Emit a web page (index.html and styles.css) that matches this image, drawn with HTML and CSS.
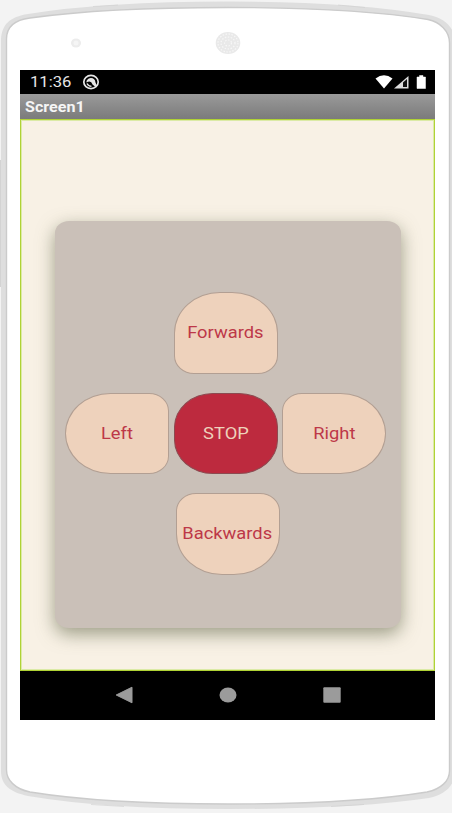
FILE: index.html
```html
<!DOCTYPE html>
<html lang="en">
<head>
<meta charset="utf-8">
<title>Screen1</title>
<link rel="stylesheet" href="styles.css">
</head>
<body>
<div class="phone">
  <svg class="shell" viewBox="0 0 452 813" aria-hidden="true">
    <path d="M1 42C1 24 10 17 28 14Q105 1.500 228 1.500Q353 1.500 429 15C446 18 455 29 455 42V771C455 785 446 794 429 798Q354 809 228 809Q104 809 28 796C10 792 1 785 1 771Z" fill="#dedede"/>
    <path d="M.500 160V287" stroke="#d3d3d3" stroke-width="1"/>
    <path d="M93 6.500L118 5M338 5L365 7.500M91 804.500L124 806.500M331 806.500L364 804.500" stroke="#cfcfcf" stroke-width=".6"/>
    <path d="M6.500 39C6.500 27 14 20 30 18Q105 7.500 228 7.500Q354 7.500 428 19.500C440 22 449.500 31 449.500 43V771C449.500 781 441 789 427 792Q354 804 228 804Q104 804 30 792C15 789 6.500 780 6.500 770Z" fill="#fff" stroke="#cbcbcb" stroke-width="1.400"/>
    <ellipse cx="76" cy="43" rx="5" ry="4.500" fill="#ececec"/>
    <circle cx="76" cy="43" r="2.500" fill="#f5f5f5"/>
    <ellipse cx="228" cy="43" rx="12.300" ry="11" fill="#e9e9e9"/>
    <ellipse cx="228" cy="43" rx="10" ry="9" fill="none" stroke="#f7f7f7" stroke-width="1.200" stroke-dasharray="1.500 1.500"/>
    <ellipse cx="228" cy="43" rx="7" ry="6" fill="none" stroke="#f7f7f7" stroke-width="1.200" stroke-dasharray="1.500 1.500"/>
    <ellipse cx="228" cy="43" rx="3.500" ry="3" fill="none" stroke="#f7f7f7" stroke-width="1.200" stroke-dasharray="1.500 1.500"/>
  </svg>
  <main class="screen">
    <header class="status">
      <span class="clock">11:36</span>
      <svg class="app-icon" viewBox="0 0 18 16">
        <ellipse cx="9" cy="8" rx="7.200" ry="6.600" fill="none" stroke="#e6e6e6" stroke-width="1.700"/>
        <path d="M4.500 7Q6 4 9 4Q13 4 13.500 8.500L15 12L13.500 13L10.500 10.500Q9.500 7.500 7.500 7.500Q6 7.500 4.500 8.500Z" fill="#e6e6e6"/>
        <path d="M5 9.500Q6 12 9.500 12.300" fill="none" stroke="#e6e6e6" stroke-width="1.300"/>
      </svg>
      <svg class="signals" viewBox="0 0 52 16">
        <path d="M.500 4.500Q9 -2 17.500 4.500L9 14.500Z" fill="#fff"/>
        <path d="M19 14.500L33.500 2V14.500Z" fill="#ddd"/>
        <path d="M28 8.500L32 5V13H28Z" fill="#111"/>
        <path d="M42 3H44.500V1.500H48V3H50.500V14.500H42Z" fill="#fff" stroke="#fff" stroke-width=".5" stroke-linejoin="round"/>
      </svg>
    </header>
    <div class="title"><span>Screen1</span></div>
    <section class="content">
      <div class="panel">
        <button class="key forwards"><span>Forwards</span></button>
        <div class="row">
          <button class="key left"><span>Left</span></button>
          <button class="key stop"><span>STOP</span></button>
          <button class="key right"><span>Right</span></button>
        </div>
        <button class="key backwards"><span>Backwards</span></button>
      </div>
    </section>
    <nav class="nav">
      <svg viewBox="0 0 18 18"><path d="M1.200 9L17 1.200V16.800Z" fill="#9b9b9b" stroke="#9b9b9b" stroke-linejoin="round"/></svg>
      <svg viewBox="0 0 18 18"><ellipse cx="9" cy="9" rx="8.500" ry="7.500" fill="#9b9b9b"/></svg>
      <svg viewBox="0 0 18 18"><rect x=".3" y="1.300" width="17.400" height="15.400" rx="1" fill="#9b9b9b"/></svg>
    </nav>
  </main>
</div>
</body>
</html>
```

FILE: styles.css
```css
* { box-sizing: border-box; }
body { margin: 0; background: #f3f3f3; font-family: Roboto, "Liberation Sans", sans-serif; }
.phone { position: relative; width: 452px; height: 813px; padding: 70px 17px 0 20px; overflow: hidden; }
.shell { position: absolute; inset: 0; width: 452px; height: 813px; }
.screen { position: relative; width: 415px; height: 649.5px; display: flex; flex-direction: column; background: #000; }
.status { height: 23.5px; display: flex; align-items: center; color: #e6e6e6; padding: 0 8px 0 10px; }
.clock { width: 51.5px; font-size: 15px; line-height: 23px; padding-top: 1px; }
.clock, .title span { transform-origin: left center; }
.clock { transform: scaleX(1.11); }
.app-icon { width: 18px; height: 16px; }
.signals { width: 52px; height: 16px; margin-left: auto; }
.title { height: 25px; padding-left: 5px; background: linear-gradient(#9a9a9a, #7b7b7b); color: #f5f5f5; font-size: 14px; font-weight: 700; line-height: 26px; }
.title span { display: inline-block; transform: scaleX(1.15); }
.content { height: 552.5px; border: 1px solid #b0d235; box-shadow: inset 0 0 0 1px #dbeaa6; background: #f8f1e5; padding: 101.5px 0 0 34px; }
.panel { width: 345.5px; height: 406.5px; border-radius: 14px / 12px; background: #cac0b8; box-shadow: 0 6px 18px rgba(95, 100, 70, .6); padding: 71px 0 0 10px; display: flex; flex-direction: column; gap: 19px; }
.row { display: flex; gap: 4.5px; }
.key { width: 104px; height: 81.5px; flex: none; padding: 0; border: 1px solid #b29f93; background: #eed2bc; color: #bd3848; font: 16px Roboto, "Liberation Sans", sans-serif; display: flex; align-items: center; justify-content: center; }
.key span { transform: scaleX(1.145); }
.forwards { margin-left: 108.5px; border-radius: 46px 46px 20px 20px / 41px 41px 18px 18px; }
.left { border-radius: 46px 20px 20px 46px / 41px 18px 18px 41px; }
.stop { border-radius: 39px / 34px; background: #bd2a3e; color: #eed2bc; border-color: #8c4a50; }
.right { border-radius: 20px 46px 46px 20px / 18px 41px 41px 18px; }
.backwards { margin-left: 110.5px; border-radius: 20px 20px 46px 46px / 18px 18px 41px 41px; }
.nav { height: 48.5px; display: flex; align-items: center; justify-content: center; gap: 86px; }
.nav svg { width: 18px; height: 18px; }
```
